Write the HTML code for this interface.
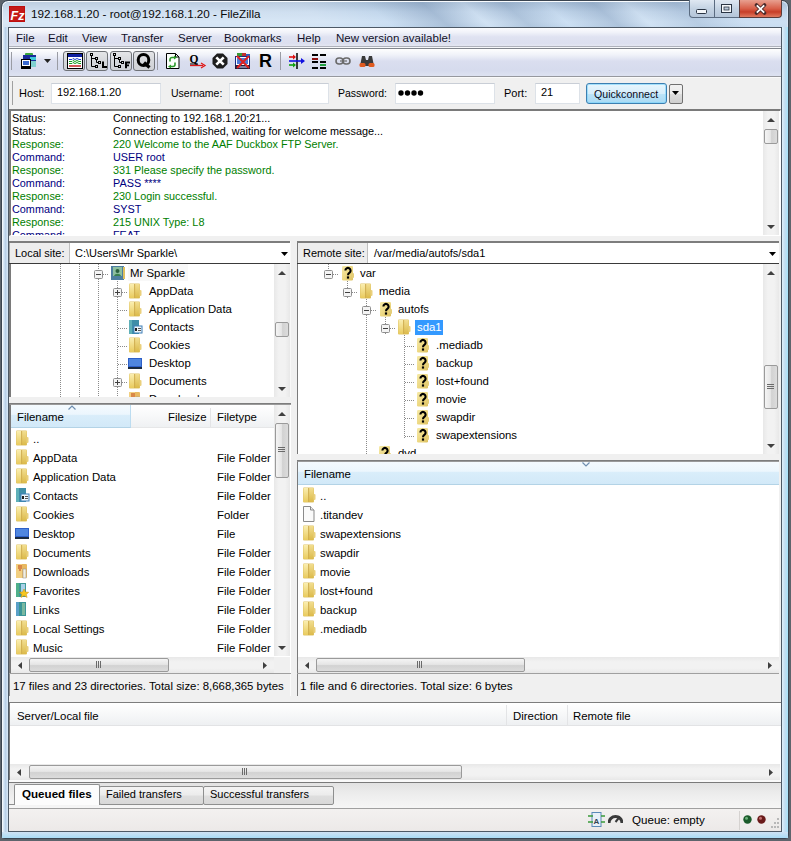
<!DOCTYPE html><html><head><meta charset="utf-8"><style>
*{margin:0;padding:0;box-sizing:border-box}
html,body{width:791px;height:841px;overflow:hidden;background:#5d646c}
body{position:relative;font-family:"Liberation Sans",sans-serif;font-size:11.4px;color:#000}
.a{position:absolute}
.t{position:absolute;white-space:pre;line-height:14px}
.tah{font-size:11px}
</style></head><body>
<svg width="0" height="0" style="position:absolute"><defs>
<linearGradient id="gf" x1="0" y1="0" x2="0" y2="1"><stop offset="0" stop-color="#faeeb0"/><stop offset="1" stop-color="#e9cb5e"/></linearGradient>
<linearGradient id="gf2" x1="0" y1="0" x2="0" y2="1"><stop offset="0" stop-color="#f2de90"/><stop offset="1" stop-color="#dcba4a"/></linearGradient>
<symbol id="folder" viewBox="0 0 16 16">
<rect x="2" y="0.5" width="11" height="15" rx="1" fill="#e0c468"/>
<rect x="2.5" y="1" width="5" height="14" fill="url(#gf)"/>
<rect x="8" y="1" width="4.5" height="14" fill="url(#gf2)"/>
<rect x="7.3" y="1" width="0.8" height="14" fill="#c9a445"/>
<rect x="12.5" y="7" width="2" height="6" rx="1" fill="#ead07c"/>
</symbol>
<symbol id="qfolder" viewBox="0 0 16 16">
<linearGradient id="gq" x1="0" y1="0" x2="1" y2="1"><stop offset="0" stop-color="#f6eaa8"/><stop offset="0.6" stop-color="#ecd67e"/><stop offset="1" stop-color="#dcc060"/></linearGradient>
<rect x="3" y="1" width="11" height="14.5" rx="1.2" fill="url(#gq)"/>
<rect x="13" y="8" width="2" height="5" rx="1" fill="#e4ce7a"/>
<path d="M6.4 5.6A2.6 2.6 0 1 1 10.6 7.6C9.6 8.3 9 8.7 9 10.2" fill="none" stroke="#000" stroke-width="2.1"/>
<rect x="7.9" y="11.4" width="2.2" height="2.2" fill="#000"/>
</symbol>
<symbol id="doc" viewBox="0 0 16 16">
<path d="M2.5 0.5h7l3.5 3.5v11.5h-10.5z" fill="#fafafa" stroke="#8a8a8a"/>
<path d="M9.5 0.5v3.5h3.5" fill="#e8e8e8" stroke="#8a8a8a"/>
</symbol>
<symbol id="ebox" viewBox="0 0 9 9">
<rect x="0.5" y="0.5" width="8" height="8" rx="1" fill="#f4f4f4" stroke="#8f8f8f"/>
<rect x="2" y="4" width="5" height="1" fill="#404040"/>
</symbol>
<symbol id="pbox" viewBox="0 0 9 9">
<rect x="0.5" y="0.5" width="8" height="8" rx="1" fill="#f4f4f4" stroke="#8f8f8f"/>
<rect x="2" y="4" width="5" height="1" fill="#404040"/><rect x="4" y="2" width="1" height="5" fill="#404040"/>
</symbol>
<symbol id="contacts" viewBox="0 0 16 16">
<rect x="2" y="1" width="10" height="14" fill="#3f8ea8"/><rect x="2" y="1" width="3" height="14" fill="#5fb0b8"/>
<rect x="7" y="7" width="8" height="7" fill="#eef6fb" stroke="#3f7fb8" stroke-width="1"/><rect x="8" y="9" width="2" height="3" fill="#222"/><rect x="11" y="9" width="3" height="1" fill="#555"/><rect x="11" y="11" width="3" height="1" fill="#555"/>
</symbol>
<symbol id="desktop" viewBox="0 0 16 16">
<rect x="1" y="3" width="14" height="11" fill="#2d5fc8"/><rect x="2" y="4" width="12" height="7" fill="#4f86e0"/><rect x="1" y="12" width="14" height="2" fill="#1a2a40"/>
</symbol>
<symbol id="downloads" viewBox="0 0 16 16">
<rect x="2" y="1" width="11" height="14" rx="1" fill="#e8b860"/><rect x="2" y="1" width="6" height="14" fill="#f2cf80"/>
<path d="M4 3h4M4 5h4M5 7h2" stroke="#c04010" stroke-width="1.2"/><rect x="9" y="6" width="3" height="9" fill="#f4f0e0" stroke="#999" stroke-width="0.6"/>
</symbol>
<symbol id="favorites" viewBox="0 0 16 16">
<rect x="2" y="1" width="10" height="14" fill="#3f9a98"/><rect x="2" y="1" width="3" height="14" fill="#4fb08a"/><rect x="7" y="2" width="4" height="8" fill="#a8d0e8"/>
<path d="M10 7l1.5 3 3.2.3-2.4 2.1.8 3.1-3.1-1.8-3 1.8.8-3.1-2.4-2.1 3.2-.3z" fill="#f6c820" stroke="#d08a10" stroke-width="0.5"/>
</symbol>
<symbol id="links" viewBox="0 0 16 16">
<rect x="2" y="1" width="10" height="14" fill="#3a9598"/><rect x="2" y="1" width="3" height="14" fill="#5aa0c8"/><rect x="8" y="2" width="3" height="12" fill="#7ab8a0"/>
</symbol>
<symbol id="user" viewBox="0 0 16 16">
<rect x="1" y="1" width="13" height="14" fill="#4e7fa0"/><rect x="3" y="2" width="9" height="9" fill="#8ec0a0"/><circle cx="7.5" cy="6" r="2" fill="#2a6040"/><path d="M4 11c1-3 6-3 7 0z" fill="#3a8050"/><rect x="13" y="2" width="2" height="12" fill="#e0c060"/>
</symbol>
</defs></svg>
<div class="a" style="left:1px;top:0px;width:788px;height:839px;border:1px solid #3a4450;border-radius:7px 7px 4px 4px;box-shadow:inset 1px 1px 0 rgba(255,255,255,.85),inset -1px -1px 0 rgba(255,255,255,.4);background:linear-gradient(90deg,#a7c1dc 0%,#bcd3ea 15%,#c8dcf1 45%,#d3e4f5 75%,#c2d8ee 100%)"></div>
<div class="a" style="left:3px;top:2px;width:784px;height:25px;border-radius:6px 6px 0 0;background:linear-gradient(41deg,rgba(255,255,255,.25) 0%,rgba(255,255,255,.2) 40%,transparent 48%,rgba(70,100,140,.25) 55%,rgba(255,255,255,.1) 60%,rgba(70,100,140,.2) 65%,transparent 70%,rgba(70,100,140,.22) 76%,rgba(255,255,255,.1) 80%,rgba(70,100,140,.15) 86%,transparent 92%),linear-gradient(#a9bfd7,#c3d7ec 40%,#cde0f3 80%,#c9ddf1)"></div>
<div class="a" style="left:3px;top:27px;width:5px;height:810px;background:linear-gradient(90deg,#e0eefa,#b9d0e8 50%,#d8e8f7)"></div>
<div class="a" style="left:782px;top:27px;width:6px;height:810px;background:linear-gradient(90deg,#dff0fa,#c2dcf0 50%,#a8e4fa)"></div>
<div class="a" style="left:2px;top:832px;width:786px;height:6px;background:linear-gradient(#cfe2f4,#a9dcf6)"></div>
<svg class="a" style="left:9px;top:6px" width="16" height="16"><rect width="16" height="16" fill="#bd0e0e"/><rect x="1" y="1" width="14" height="14" fill="#c41a18"/><text x="1.5" y="13.5" font-family="Liberation Sans" font-weight="bold" font-style="italic" font-size="12.5" fill="#fff">Fz</text></svg>
<div class="t" style="left:31px;top:7px;font-size:11.7px;color:#0a0a0a">192.168.1.20 - root@192.168.1.20 - FileZilla</div>
<div class="a" style="left:689px;top:0px;width:51px;height:18px;border:1px solid #5a6b80;border-top:none;border-radius:0 0 0 4px;background:linear-gradient(#dfe8f2,#c4d3e3 50%,#b5c6d9)"></div>
<div class="a" style="left:714px;top:0px;width:1px;height:18px;background:#5a6b80"></div>
<div class="a" style="left:739px;top:0px;width:43px;height:18px;border:1px solid #5a3a38;border-top:none;border-radius:0 0 4px 0;background:linear-gradient(#e8a090,#d8604a 50%,#c73e28 70%,#e07a60)"></div>
<svg class="a" style="left:696px;top:9px" width="12" height="6" viewBox="0 0 12 6"><rect x="0.5" y="0.5" width="10" height="4" rx="1" fill="#f4f7fa" stroke="#2a3544"/></svg>
<svg class="a" style="left:721px;top:4px" width="12" height="10" viewBox="0 0 12 10"><rect x="0.5" y="0.5" width="10" height="8" fill="#f4f7fa" stroke="#2a3544"/><rect x="3" y="3" width="5" height="3" fill="#b9c8d8" stroke="#2a3544" stroke-width="0.8"/></svg>
<svg class="a" style="left:754px;top:3px" width="13" height="12" viewBox="0 0 13 12"><path d="M2.5 2L10.5 10M10.5 2L2.5 10" stroke="#4a2a2a" stroke-width="3.6" fill="none" stroke-linecap="round"/><path d="M2.8 2.3L10.2 9.7M10.2 2.3L2.8 9.7" stroke="#fff" stroke-width="1.8" fill="none"/></svg>
<div class="a" style="left:8px;top:27px;width:774px;height:805px;border:1px solid #4d5966;background:#f0f0f0"></div>
<div class="a" style="left:9px;top:28px;width:772px;height:18px;background:linear-gradient(#fcfcfe 0%,#f0f2f9 25%,#dfe2f1 50%,#dcdfef 85%,#e4e6f1 100%)"></div>
<div class="a" style="left:9px;top:46px;width:772px;height:1px;background:#aeb1bb"></div>
<div class="a" style="left:9px;top:47px;width:772px;height:1px;background:#f6f7fa"></div>
<div class="a" style="left:9px;top:48px;width:772px;height:1px;background:#80848c"></div>
<div class="t" style="left:16px;top:31px;font-size:11.5px;color:#101028">File</div>
<div class="t" style="left:48px;top:31px;font-size:11.5px;color:#101028">Edit</div>
<div class="t" style="left:82px;top:31px;font-size:11.5px;color:#101028">View</div>
<div class="t" style="left:121px;top:31px;font-size:11.5px;color:#101028">Transfer</div>
<div class="t" style="left:178px;top:31px;font-size:11.5px;color:#101028">Server</div>
<div class="t" style="left:224px;top:31px;font-size:11.5px;color:#101028">Bookmarks</div>
<div class="t" style="left:297px;top:31px;font-size:11.5px;color:#101028">Help</div>
<div class="t" style="left:336px;top:31px;font-size:11.5px;color:#101028">New version available!</div>
<div class="a" style="left:9px;top:49px;width:772px;height:27px;background:linear-gradient(#fefefe 0%,#f0f2f9 22%,#dadeef 45%,#d6dbed 80%,#dde2f1 100%)"></div>
<div class="a" style="left:9px;top:76px;width:772px;height:1px;background:#96989e"></div>
<div class="a" style="left:11px;top:52px;width:1px;height:18px;background:#9a9ca4"></div>
<div class="a" style="left:57px;top:52px;width:1px;height:18px;background:#9a9ca4"></div>
<div class="a" style="left:157px;top:52px;width:1px;height:18px;background:#9a9ca4"></div>
<div class="a" style="left:280px;top:52px;width:1px;height:18px;background:#9a9ca4"></div>
<svg class="a" style="left:21px;top:53px" width="16" height="16" viewBox="0 0 16 16"><rect x="4" y="0" width="8" height="3" rx="1" fill="#3ca83c"/><rect x="2" y="2" width="13" height="12" fill="#1a2a9a"/><rect x="9" y="4" width="6" height="3" fill="#40c8d8"/><rect x="9" y="8" width="6" height="6" fill="#80d0d0"/><rect x="0.5" y="6.5" width="9" height="7" fill="#fff" stroke="#000"/><rect x="2" y="8" width="6" height="4" fill="#3a6ad0"/><rect x="0" y="13" width="10" height="3" fill="#000"/></svg>
<svg class="a" style="left:44px;top:59px" width="8" height="5" viewBox="0 0 8 5"><path d="M0 0h7l-3.5 4z" fill="#222"/></svg>
<div class="a" style="left:63px;top:51px;width:22px;height:20px;border:1px solid #6f7277;border-radius:3px;background:linear-gradient(#e4e5e8,#d6d8dc 50%,#cfd1d6)"></div>
<div class="a" style="left:86px;top:51px;width:22px;height:20px;border:1px solid #6f7277;border-radius:3px;background:linear-gradient(#e4e5e8,#d6d8dc 50%,#cfd1d6)"></div>
<div class="a" style="left:110px;top:51px;width:22px;height:20px;border:1px solid #6f7277;border-radius:3px;background:linear-gradient(#e4e5e8,#d6d8dc 50%,#cfd1d6)"></div>
<div class="a" style="left:133px;top:51px;width:22px;height:20px;border:1px solid #6f7277;border-radius:3px;background:linear-gradient(#e4e5e8,#d6d8dc 50%,#cfd1d6)"></div>
<svg class="a" style="left:67px;top:53px" width="17" height="16" viewBox="0 0 17 16"><rect x="0.5" y="0.5" width="15" height="15" fill="#fff" stroke="#000"/><rect x="1" y="1" width="14" height="3" fill="#1020a0"/><path d="M2 6.5h3l1-1 2 1 2-1 2 1h2" stroke="#2040d0" fill="none"/><path d="M2 8.5h3l1-1 2 1 2-1 2 1h2" stroke="#10a020" fill="none"/><path d="M2 10.5h3l1-1 2 1 2-1 2 1h2" stroke="#10a020" fill="none"/><path d="M2 13h12" stroke="#c02020" stroke-width="1.5"/></svg>
<svg class="a" style="left:89px;top:53px" width="18" height="16" viewBox="0 0 18 16"><g fill="none" stroke="#000"><rect x="1.5" y="0.5" width="2" height="2"/><rect x="6.5" y="4.5" width="2" height="2"/><rect x="9.5" y="8.5" width="2" height="2"/><rect x="6.5" y="12.5" width="2" height="2"/><path d="M2.5 3v10.5h4M2.5 5.5h4M7.5 7v2.5h2"/></g><path d="M13 8.5h2v4.5h3v2h-5z" fill="#000"/></svg>
<svg class="a" style="left:112px;top:53px" width="18" height="16" viewBox="0 0 18 16"><g fill="none" stroke="#000"><rect x="1.5" y="0.5" width="2" height="2"/><rect x="6.5" y="4.5" width="2" height="2"/><rect x="9.5" y="8.5" width="2" height="2"/><rect x="6.5" y="12.5" width="2" height="2"/><path d="M2.5 3v10.5h4M2.5 5.5h4M7.5 7v2.5h2"/></g><path d="M13 8.5h5v2h-3v1h2v1.8h-2v2h-2z" fill="#000"/></svg>
<svg class="a" style="left:136px;top:53px" width="16" height="16" viewBox="0 0 16 16"><ellipse cx="7.5" cy="7" rx="5.3" ry="5.5" fill="none" stroke="#000" stroke-width="3"/><path d="M8 9.5l5.5 5" stroke="#000" stroke-width="3.2"/></svg>
<svg class="a" style="left:166px;top:53px" width="14" height="16" viewBox="0 0 14 16"><path d="M0.5 0.5h9l3.5 3.5v11.5h-12.5z" fill="#fafffa" stroke="#000"/><path d="M9.5 0.5v3.5h3.5" fill="none" stroke="#000"/><g fill="none" stroke="#2a9a2a" stroke-width="1.6"><path d="M4 8.5v-2a2 2 0 0 1 2-2h3"/><path d="M9 9.5v2a2 2 0 0 1-2 2h-3"/></g><path d="M8 2.5l3 2-3 2z" fill="#2a9a2a"/><path d="M5 11.5l-3 2 3 2z" fill="#2a9a2a"/></svg>
<svg class="a" style="left:189px;top:53px" width="18" height="16" viewBox="0 0 18 16"><text x="0.5" y="9.5" font-family="Liberation Serif" font-weight="bold" font-size="11.5" fill="#000">Q</text><rect x="1" y="10.5" width="8" height="1" fill="#000"/><path d="M1 12.5h13" stroke="#e01818" stroke-width="1.3"/><path d="M12 10l4 2.5-4 2.5" stroke="#e01818" stroke-width="1.3" fill="none"/></svg>
<svg class="a" style="left:212px;top:53px" width="16" height="16" viewBox="0 0 16 16"><path d="M5 0.5h6l4.5 4.5v6l-4.5 4.5h-6l-4.5-4.5v-6z" fill="#1e1e1e"/><path d="M4.3 4.3l7.4 7.4M11.7 4.3l-7.4 7.4" stroke="#fff" stroke-width="2.6"/></svg>
<svg class="a" style="left:235px;top:53px" width="16" height="16" viewBox="0 0 16 16"><rect x="2" y="0" width="5" height="3" fill="#3a9a3a"/><rect x="7" y="0" width="4" height="3" fill="#c03030"/><rect x="11" y="1" width="4" height="3" fill="#3060c0"/><rect x="0.5" y="3.5" width="14" height="9" fill="#fff" stroke="#1a2a80"/><rect x="2" y="5" width="11" height="6" fill="#4a7ad8"/><rect x="0" y="12" width="15" height="4" fill="#202040"/><rect x="3" y="13" width="9" height="2" fill="#8080a0"/><path d="M2 3l12 12M14 3l-12 12" stroke="#e02020" stroke-width="2"/></svg>
<div class="t" style="left:259px;top:51px;font-size:18px;font-weight:bold;line-height:20px">R</div>
<svg class="a" style="left:289px;top:53px" width="17" height="16" viewBox="0 0 17 16"><path d="M8 0v16" stroke="#000" stroke-width="1.5"/><path d="M0 4h6" stroke="#e01010" stroke-width="1.6"/><path d="M4 1.5l3 2.5-3 2.5z" fill="#e01010"/><path d="M0 8h14" stroke="#1010e0" stroke-width="1.6"/><path d="M12 5l4 3-4 3z" fill="#1010e0"/><path d="M0 12h6" stroke="#10a010" stroke-width="1.6"/><path d="M4 9.5l3 2.5-3 2.5z" fill="#10a010"/></svg>
<svg class="a" style="left:312px;top:53px" width="16" height="16" viewBox="0 0 16 16"><rect x="0" y="1" width="6" height="2" fill="#000"/><rect x="8" y="1" width="6" height="2" fill="#000"/><rect x="0" y="5" width="6" height="2" fill="#901010"/><rect x="0" y="8" width="6" height="2" fill="#000"/><rect x="8" y="8" width="6" height="2" fill="#000"/><rect x="8" y="11" width="6" height="2" fill="#20a040"/><rect x="0" y="14" width="6" height="2" fill="#000"/><rect x="8" y="14" width="6" height="2" fill="#000"/></svg>
<svg class="a" style="left:335px;top:57px" width="17" height="8" viewBox="0 0 17 8"><g fill="none" stroke="#6a6a6a" stroke-width="1.6"><rect x="1" y="1" width="7" height="6" rx="3"/><rect x="8" y="1" width="7" height="6" rx="3"/></g><path d="M5 4h7" stroke="#6a6a6a" stroke-width="1.2"/></svg>
<svg class="a" style="left:359px;top:54px" width="16" height="14" viewBox="0 0 16 14"><path d="M1 12l2-10h3l1 4h2l1-4h3l2 10z" fill="#3a3a3a"/><rect x="0.5" y="9" width="6" height="4" rx="1.5" fill="#e05a20"/><rect x="9.5" y="9" width="6" height="4" rx="1.5" fill="#e05a20"/></svg>
<div class="a" style="left:9px;top:77px;width:772px;height:32px;background:#f0f0f0;border-top:1px solid #fafafa"></div>
<div class="a" style="left:12px;top:81px;width:1px;height:24px;background:#a0a0a0"></div>
<div class="t" style="left:19px;top:86px;font-size:11px">Host:</div>
<div class="a" style="left:51px;top:83px;width:110px;height:21px;background:#fff;border:1px solid #dde2e8;border-top-color:#c9ced6"></div>
<div class="t" style="left:57px;top:85px;font-size:11px;">192.168.1.20</div>
<div class="t" style="left:171px;top:86px;font-size:10.5px">Username:</div>
<div class="a" style="left:229px;top:83px;width:100px;height:21px;background:#fff;border:1px solid #dde2e8;border-top-color:#c9ced6"></div>
<div class="t" style="left:235px;top:85px;font-size:11px;">root</div>
<div class="t" style="left:338px;top:86px;font-size:10.5px">Password:</div>
<div class="a" style="left:395px;top:83px;width:100px;height:21px;background:#fff;border:1px solid #dde2e8;border-top-color:#c9ced6"></div>
<div class="t" style="left:401px;top:85px;font-size:11px;"></div>
<svg class="a" style="left:398px;top:90px" width="27" height="6" viewBox="0 0 27 6"><g fill="#000"><circle cx="3" cy="3" r="2.7"/><circle cx="9.5" cy="3" r="2.7"/><circle cx="16" cy="3" r="2.7"/><circle cx="22.5" cy="3" r="2.7"/></g></svg>
<div class="t" style="left:504px;top:86px;font-size:11px">Port:</div>
<div class="a" style="left:535px;top:83px;width:45px;height:21px;background:#fff;border:1px solid #dde2e8;border-top-color:#c9ced6"></div>
<div class="t" style="left:541px;top:85px;font-size:11px;">21</div>
<div class="a" style="left:586px;top:83px;width:81px;height:21px;border:1px solid #3c7fb1;border-radius:3px;box-shadow:inset 0 0 0 1px rgba(120,210,250,.6);background:linear-gradient(#e8f6fd,#d6eefb 50%,#bde4f8 51%,#a9daf4)"></div>
<div class="t" style="left:594px;top:87px;font-size:10.6px;color:#0a0a1a">Quickconnect</div>
<div class="a" style="left:669px;top:84px;width:14px;height:20px;border:1px solid #707070;border-radius:2px;background:linear-gradient(#f2f2f2,#ebebeb 50%,#dddddd 51%,#cfcfcf)"></div>
<svg class="a" style="left:672px;top:91px" width="8" height="5" viewBox="0 0 8 5"><path d="M0 0h7l-3.5 4z" fill="#000"/></svg>
<div class="a" style="left:9px;top:109px;width:772px;height:127px;border-top:2px solid #7a7a7a;border-left:2px solid #7a7a7a;border-right:1px solid #fff;border-bottom:1px solid #fff;background:#fff"></div>
<div class="a" style="left:11px;top:111px;width:752px;height:124px;overflow:hidden">
<div class="t" style="left:1px;top:1px;font-size:10.85px;line-height:13px;color:#000">Status:</div>
<div class="t" style="left:102px;top:1px;font-size:10.85px;line-height:13px;color:#000">Connecting to 192.168.1.20:21...</div>
<div class="t" style="left:1px;top:14px;font-size:10.85px;line-height:13px;color:#000">Status:</div>
<div class="t" style="left:102px;top:14px;font-size:10.85px;line-height:13px;color:#000">Connection established, waiting for welcome message...</div>
<div class="t" style="left:1px;top:27px;font-size:10.85px;line-height:13px;color:#008000">Response:</div>
<div class="t" style="left:102px;top:27px;font-size:10.85px;line-height:13px;color:#008000">220 Welcome to the AAF Duckbox FTP Server.</div>
<div class="t" style="left:1px;top:40px;font-size:10.85px;line-height:13px;color:#000080">Command:</div>
<div class="t" style="left:102px;top:40px;font-size:10.85px;line-height:13px;color:#000080">USER root</div>
<div class="t" style="left:1px;top:53px;font-size:10.85px;line-height:13px;color:#008000">Response:</div>
<div class="t" style="left:102px;top:53px;font-size:10.85px;line-height:13px;color:#008000">331 Please specify the password.</div>
<div class="t" style="left:1px;top:66px;font-size:10.85px;line-height:13px;color:#000080">Command:</div>
<div class="t" style="left:102px;top:66px;font-size:10.85px;line-height:13px;color:#000080">PASS ****</div>
<div class="t" style="left:1px;top:79px;font-size:10.85px;line-height:13px;color:#008000">Response:</div>
<div class="t" style="left:102px;top:79px;font-size:10.85px;line-height:13px;color:#008000">230 Login successful.</div>
<div class="t" style="left:1px;top:92px;font-size:10.85px;line-height:13px;color:#000080">Command:</div>
<div class="t" style="left:102px;top:92px;font-size:10.85px;line-height:13px;color:#000080">SYST</div>
<div class="t" style="left:1px;top:105px;font-size:10.85px;line-height:13px;color:#008000">Response:</div>
<div class="t" style="left:102px;top:105px;font-size:10.85px;line-height:13px;color:#008000">215 UNIX Type: L8</div>
<div class="t" style="left:1px;top:118px;font-size:10.85px;line-height:13px;color:#000080">Command:</div>
<div class="t" style="left:102px;top:118px;font-size:10.85px;line-height:13px;color:#000080">FEAT</div>
</div>
<div class="a" style="left:763px;top:111px;width:16px;height:124px;background:linear-gradient(90deg,#e8e8e8,#f2f2f2 30%,#f2f2f2 70%,#e8e8e8)"></div>
<svg class="a" style="left:767px;top:118px" width="8" height="4" viewBox="0 0 8 4"><path d="M0 4L4 0L8 4z" fill="#404040"/></svg>
<svg class="a" style="left:767px;top:225px" width="8" height="4" viewBox="0 0 8 4"><path d="M0 0L8 0L4 4z" fill="#404040"/></svg>
<div class="a" style="left:764px;top:129px;width:14px;height:15px;border:1px solid #9a9a9a;border-radius:2px;background:linear-gradient(90deg,#f4f4f4,#e6e6e6 45%,#d2d2d2 55%,#dcdcdc)"></div>
<div class="a" style="left:9px;top:241px;width:282px;height:2px;background:#7d7d7d"></div>
<div class="a" style="left:9px;top:243px;width:61px;height:20px;background:#ededed;border-right:1px solid #c0c0c0;border-left:1px solid #a0a0a0"></div>
<div class="t" style="left:15px;top:246px;font-size:11px">Local site:</div>
<div class="a" style="left:70px;top:243px;width:221px;height:20px;background:#fff"></div>
<div class="t" style="left:75px;top:246px;font-size:11px">C:\Users\Mr Sparkle\</div>
<svg class="a" style="left:281px;top:252px" width="7" height="4" viewBox="0 0 7 4"><path d="M0 0h7l-3.5 4z" fill="#000"/></svg>
<div class="a" style="left:9px;top:263px;width:282px;height:1px;background:#3a3a3a"></div>
<div class="a" style="left:297px;top:241px;width:482px;height:2px;background:#7d7d7d"></div>
<div class="a" style="left:297px;top:243px;width:71px;height:20px;background:#ededed;border-right:1px solid #c0c0c0;border-left:1px solid #7a7a7a"></div>
<div class="t" style="left:303px;top:246px;font-size:11px">Remote site:</div>
<div class="a" style="left:368px;top:243px;width:411px;height:20px;background:#fff"></div>
<div class="t" style="left:374px;top:246px;font-size:11px">/var/media/autofs/sda1</div>
<svg class="a" style="left:769px;top:252px" width="7" height="4" viewBox="0 0 7 4"><path d="M0 0h7l-3.5 4z" fill="#000"/></svg>
<div class="a" style="left:297px;top:263px;width:482px;height:1px;background:#3a3a3a"></div>
<div class="a" style="left:9px;top:264px;width:282px;height:134px;background:#fff;border-left:2px solid #7a7a7a"></div>
<div class="a" style="left:11px;top:264px;width:263px;height:133px;overflow:hidden">
<div class="a" style="left:49px;top:0px;width:1px;height:133px;background:repeating-linear-gradient(#8a8a8a 0 1px,transparent 1px 2px)"></div>
<div class="a" style="left:68px;top:0px;width:1px;height:133px;background:repeating-linear-gradient(#8a8a8a 0 1px,transparent 1px 2px)"></div>
<div class="a" style="left:87px;top:0px;width:1px;height:6px;background:repeating-linear-gradient(#8a8a8a 0 1px,transparent 1px 2px)"></div>
<div class="a" style="left:87px;top:15px;width:1px;height:118px;background:repeating-linear-gradient(#8a8a8a 0 1px,transparent 1px 2px)"></div>
<div class="a" style="left:106px;top:17px;width:1px;height:116px;background:repeating-linear-gradient(#8a8a8a 0 1px,transparent 1px 2px)"></div>
<svg class="a" style="left:83px;top:6px" width="9" height="9"><use href="#ebox"/></svg>
<div class="a" style="left:92px;top:10px;width:6px;height:1px;background:repeating-linear-gradient(90deg,#8a8a8a 0 1px,transparent 1px 2px)"></div>
<svg class="a" style="left:99px;top:1px" width="16" height="16"><use href="#user"/></svg>
<div class="a" style="left:117px;top:0px;width:60px;height:17px;background:#f8f8f8"></div>
<div class="t" style="left:119px;top:2px">Mr Sparkle</div>
<svg class="a" style="left:102px;top:24px" width="9" height="9"><use href="#pbox"/></svg>
<div class="a" style="left:111px;top:28px;width:5px;height:1px;background:repeating-linear-gradient(90deg,#8a8a8a 0 1px,transparent 1px 2px)"></div>
<svg class="a" style="left:116px;top:19px" width="16" height="16"><use href="#folder"/></svg>
<div class="t" style="left:138px;top:20px">AppData</div>
<div class="a" style="left:107px;top:46px;width:9px;height:1px;background:repeating-linear-gradient(90deg,#8a8a8a 0 1px,transparent 1px 2px)"></div>
<svg class="a" style="left:116px;top:37px" width="16" height="16"><use href="#folder"/></svg>
<div class="t" style="left:138px;top:38px">Application Data</div>
<div class="a" style="left:107px;top:64px;width:9px;height:1px;background:repeating-linear-gradient(90deg,#8a8a8a 0 1px,transparent 1px 2px)"></div>
<svg class="a" style="left:116px;top:55px" width="16" height="16"><use href="#contacts"/></svg>
<div class="t" style="left:138px;top:56px">Contacts</div>
<div class="a" style="left:107px;top:82px;width:9px;height:1px;background:repeating-linear-gradient(90deg,#8a8a8a 0 1px,transparent 1px 2px)"></div>
<svg class="a" style="left:116px;top:73px" width="16" height="16"><use href="#folder"/></svg>
<div class="t" style="left:138px;top:74px">Cookies</div>
<div class="a" style="left:107px;top:100px;width:9px;height:1px;background:repeating-linear-gradient(90deg,#8a8a8a 0 1px,transparent 1px 2px)"></div>
<svg class="a" style="left:116px;top:91px" width="16" height="16"><use href="#desktop"/></svg>
<div class="t" style="left:138px;top:92px">Desktop</div>
<svg class="a" style="left:102px;top:114px" width="9" height="9"><use href="#pbox"/></svg>
<div class="a" style="left:111px;top:118px;width:5px;height:1px;background:repeating-linear-gradient(90deg,#8a8a8a 0 1px,transparent 1px 2px)"></div>
<svg class="a" style="left:116px;top:109px" width="16" height="16"><use href="#folder"/></svg>
<div class="t" style="left:138px;top:110px">Documents</div>
<div class="a" style="left:107px;top:136px;width:9px;height:1px;background:repeating-linear-gradient(90deg,#8a8a8a 0 1px,transparent 1px 2px)"></div>
<svg class="a" style="left:116px;top:127px" width="16" height="16"><use href="#downloads"/></svg>
<div class="t" style="left:138px;top:128px">Downloads</div>
</div>
<div class="a" style="left:274px;top:264px;width:16px;height:133px;background:linear-gradient(90deg,#e8e8e8,#f2f2f2 30%,#f2f2f2 70%,#e8e8e8)"></div>
<svg class="a" style="left:278px;top:271px" width="8" height="4" viewBox="0 0 8 4"><path d="M0 4L4 0L8 4z" fill="#404040"/></svg>
<svg class="a" style="left:278px;top:387px" width="8" height="4" viewBox="0 0 8 4"><path d="M0 0L8 0L4 4z" fill="#404040"/></svg>
<div class="a" style="left:275px;top:322px;width:14px;height:15px;border:1px solid #9a9a9a;border-radius:2px;background:linear-gradient(90deg,#f4f4f4,#e6e6e6 45%,#d2d2d2 55%,#dcdcdc)"></div>
<div class="a" style="left:290px;top:241px;width:1px;height:457px;background:#f8f8f8"></div>
<div class="a" style="left:297px;top:264px;width:482px;height:191px;background:#fff;border-left:1px solid #7a7a7a"></div>
<div class="a" style="left:298px;top:264px;width:465px;height:190px;overflow:hidden">
<div class="a" style="left:30px;top:0px;width:1px;height:6px;background:repeating-linear-gradient(#8a8a8a 0 1px,transparent 1px 2px)"></div>
<div class="a" style="left:49px;top:17px;width:1px;height:18px;background:repeating-linear-gradient(#8a8a8a 0 1px,transparent 1px 2px)"></div>
<div class="a" style="left:68px;top:35px;width:1px;height:160px;background:repeating-linear-gradient(#8a8a8a 0 1px,transparent 1px 2px)"></div>
<div class="a" style="left:87px;top:53px;width:1px;height:18px;background:repeating-linear-gradient(#8a8a8a 0 1px,transparent 1px 2px)"></div>
<div class="a" style="left:106px;top:71px;width:1px;height:104px;background:repeating-linear-gradient(#8a8a8a 0 1px,transparent 1px 2px)"></div>
<svg class="a" style="left:26px;top:6px" width="9" height="9"><use href="#ebox"/></svg>
<div class="a" style="left:35px;top:10px;width:6px;height:1px;background:repeating-linear-gradient(90deg,#8a8a8a 0 1px,transparent 1px 2px)"></div>
<svg class="a" style="left:41px;top:1px" width="16" height="16"><use href="#qfolder"/></svg>
<div class="t" style="left:62px;top:2px">var</div>
<svg class="a" style="left:45px;top:24px" width="9" height="9"><use href="#ebox"/></svg>
<div class="a" style="left:54px;top:28px;width:6px;height:1px;background:repeating-linear-gradient(90deg,#8a8a8a 0 1px,transparent 1px 2px)"></div>
<svg class="a" style="left:60px;top:19px" width="16" height="16"><use href="#folder"/></svg>
<div class="t" style="left:81px;top:20px">media</div>
<svg class="a" style="left:64px;top:42px" width="9" height="9"><use href="#ebox"/></svg>
<div class="a" style="left:73px;top:46px;width:6px;height:1px;background:repeating-linear-gradient(90deg,#8a8a8a 0 1px,transparent 1px 2px)"></div>
<svg class="a" style="left:79px;top:37px" width="16" height="16"><use href="#qfolder"/></svg>
<div class="t" style="left:100px;top:38px">autofs</div>
<svg class="a" style="left:83px;top:60px" width="9" height="9"><use href="#ebox"/></svg>
<div class="a" style="left:92px;top:64px;width:6px;height:1px;background:repeating-linear-gradient(90deg,#8a8a8a 0 1px,transparent 1px 2px)"></div>
<svg class="a" style="left:98px;top:55px" width="16" height="16"><use href="#folder"/></svg>
<div class="a" style="left:117px;top:56px;width:28px;height:15px;background:#3399ff"></div>
<div class="t" style="left:119px;top:56px;color:#fff">sda1</div>
<div class="a" style="left:107px;top:82px;width:10px;height:1px;background:repeating-linear-gradient(90deg,#8a8a8a 0 1px,transparent 1px 2px)"></div>
<svg class="a" style="left:116px;top:73px" width="16" height="16"><use href="#qfolder"/></svg>
<div class="t" style="left:138px;top:74px">.mediadb</div>
<div class="a" style="left:107px;top:100px;width:10px;height:1px;background:repeating-linear-gradient(90deg,#8a8a8a 0 1px,transparent 1px 2px)"></div>
<svg class="a" style="left:116px;top:91px" width="16" height="16"><use href="#qfolder"/></svg>
<div class="t" style="left:138px;top:92px">backup</div>
<div class="a" style="left:107px;top:118px;width:10px;height:1px;background:repeating-linear-gradient(90deg,#8a8a8a 0 1px,transparent 1px 2px)"></div>
<svg class="a" style="left:116px;top:109px" width="16" height="16"><use href="#qfolder"/></svg>
<div class="t" style="left:138px;top:110px">lost+found</div>
<div class="a" style="left:107px;top:136px;width:10px;height:1px;background:repeating-linear-gradient(90deg,#8a8a8a 0 1px,transparent 1px 2px)"></div>
<svg class="a" style="left:116px;top:127px" width="16" height="16"><use href="#qfolder"/></svg>
<div class="t" style="left:138px;top:128px">movie</div>
<div class="a" style="left:107px;top:154px;width:10px;height:1px;background:repeating-linear-gradient(90deg,#8a8a8a 0 1px,transparent 1px 2px)"></div>
<svg class="a" style="left:116px;top:145px" width="16" height="16"><use href="#qfolder"/></svg>
<div class="t" style="left:138px;top:146px">swapdir</div>
<div class="a" style="left:107px;top:172px;width:10px;height:1px;background:repeating-linear-gradient(90deg,#8a8a8a 0 1px,transparent 1px 2px)"></div>
<svg class="a" style="left:116px;top:163px" width="16" height="16"><use href="#qfolder"/></svg>
<div class="t" style="left:138px;top:164px">swapextensions</div>
<div class="a" style="left:31px;top:190px;width:10px;height:1px;background:repeating-linear-gradient(90deg,#8a8a8a 0 1px,transparent 1px 2px)"></div>
<svg class="a" style="left:78px;top:181px" width="16" height="16"><use href="#qfolder"/></svg>
<div class="t" style="left:100px;top:182px">dvd</div>
</div>
<div class="a" style="left:763px;top:264px;width:16px;height:190px;background:linear-gradient(90deg,#e8e8e8,#f2f2f2 30%,#f2f2f2 70%,#e8e8e8)"></div>
<svg class="a" style="left:767px;top:271px" width="8" height="4" viewBox="0 0 8 4"><path d="M0 4L4 0L8 4z" fill="#404040"/></svg>
<svg class="a" style="left:767px;top:444px" width="8" height="4" viewBox="0 0 8 4"><path d="M0 0L8 0L4 4z" fill="#404040"/></svg>
<div class="a" style="left:764px;top:365px;width:14px;height:44px;border:1px solid #9a9a9a;border-radius:2px;background:linear-gradient(90deg,#f4f4f4,#e6e6e6 45%,#d2d2d2 55%,#dcdcdc)"></div>
<svg class="a" style="left:767px;top:384px" width="8" height="6" viewBox="0 0 8 6"><path d="M0 0.5h7M0 2.5h7M0 4.5h7" stroke="#6a6a6a"/></svg>
<div class="a" style="left:9px;top:397px;width:282px;height:7px;background:#f0f0f0"></div>
<div class="a" style="left:9px;top:403px;width:282px;height:1px;background:#7d7d7d"></div>
<div class="a" style="left:9px;top:404px;width:282px;height:270px;background:#fff;border-left:2px solid #7a7a7a;border-top:1px solid #9a9a9a"></div>
<div class="a" style="left:11px;top:405px;width:263px;height:23px;background:linear-gradient(#fff,#f7f8f9 50%,#eef0f2)"></div>
<div class="a" style="left:11px;top:405px;width:120px;height:23px;background:linear-gradient(#f4fafe,#ecf6fd 42%,#d9edfa 48%,#d2e9f8);border-right:1px solid #bcdcf0;border-bottom:1px solid #b3d3e6"></div>
<div class="a" style="left:131px;top:427px;width:143px;height:1px;background:#e6e7e8"></div>
<div class="a" style="left:210px;top:408px;width:1px;height:19px;background:#e3e4e6"></div>
<svg class="a" style="left:68px;top:405px" width="8" height="5" viewBox="0 0 8 5"><path d="M0.5 4.5L4 1L7.5 4.5" fill="none" stroke="#6f8fb0" stroke-width="1.2"/></svg>
<div class="t" style="left:17px;top:410px;">Filename</div>
<div class="t" style="left:168px;top:410px;">Filesize</div>
<div class="t" style="left:217px;top:410px;">Filetype</div>
<div class="a" style="left:11px;top:428px;width:263px;height:228px;overflow:hidden">
<svg class="a" style="left:3px;top:2px" width="16" height="16"><use href="#folder"/></svg>
<div class="t" style="left:22px;top:4px">..</div>
<svg class="a" style="left:3px;top:21px" width="16" height="16"><use href="#folder"/></svg>
<div class="t" style="left:22px;top:23px">AppData</div>
<div class="t" style="left:206px;top:23px">File Folder</div>
<svg class="a" style="left:3px;top:40px" width="16" height="16"><use href="#folder"/></svg>
<div class="t" style="left:22px;top:42px">Application Data</div>
<div class="t" style="left:206px;top:42px">File Folder</div>
<svg class="a" style="left:3px;top:59px" width="16" height="16"><use href="#contacts"/></svg>
<div class="t" style="left:22px;top:61px">Contacts</div>
<div class="t" style="left:206px;top:61px">File Folder</div>
<svg class="a" style="left:3px;top:78px" width="16" height="16"><use href="#folder"/></svg>
<div class="t" style="left:22px;top:80px">Cookies</div>
<div class="t" style="left:206px;top:80px">Folder</div>
<svg class="a" style="left:3px;top:97px" width="16" height="16"><use href="#desktop"/></svg>
<div class="t" style="left:22px;top:99px">Desktop</div>
<div class="t" style="left:206px;top:99px">File</div>
<svg class="a" style="left:3px;top:116px" width="16" height="16"><use href="#folder"/></svg>
<div class="t" style="left:22px;top:118px">Documents</div>
<div class="t" style="left:206px;top:118px">File Folder</div>
<svg class="a" style="left:3px;top:135px" width="16" height="16"><use href="#downloads"/></svg>
<div class="t" style="left:22px;top:137px">Downloads</div>
<div class="t" style="left:206px;top:137px">File Folder</div>
<svg class="a" style="left:3px;top:154px" width="16" height="16"><use href="#favorites"/></svg>
<div class="t" style="left:22px;top:156px">Favorites</div>
<div class="t" style="left:206px;top:156px">File Folder</div>
<svg class="a" style="left:3px;top:173px" width="16" height="16"><use href="#links"/></svg>
<div class="t" style="left:22px;top:175px">Links</div>
<div class="t" style="left:206px;top:175px">File Folder</div>
<svg class="a" style="left:3px;top:192px" width="16" height="16"><use href="#folder"/></svg>
<div class="t" style="left:22px;top:194px">Local Settings</div>
<div class="t" style="left:206px;top:194px">File Folder</div>
<svg class="a" style="left:3px;top:211px" width="16" height="16"><use href="#folder"/></svg>
<div class="t" style="left:22px;top:213px">Music</div>
<div class="t" style="left:206px;top:213px">File Folder</div>
</div>
<div class="a" style="left:274px;top:405px;width:16px;height:251px;background:linear-gradient(90deg,#e8e8e8,#f2f2f2 30%,#f2f2f2 70%,#e8e8e8)"></div>
<svg class="a" style="left:278px;top:412px" width="8" height="4" viewBox="0 0 8 4"><path d="M0 4L4 0L8 4z" fill="#404040"/></svg>
<svg class="a" style="left:278px;top:646px" width="8" height="4" viewBox="0 0 8 4"><path d="M0 0L8 0L4 4z" fill="#404040"/></svg>
<div class="a" style="left:275px;top:423px;width:14px;height:55px;border:1px solid #9a9a9a;border-radius:2px;background:linear-gradient(90deg,#f4f4f4,#e6e6e6 45%,#d2d2d2 55%,#dcdcdc)"></div>
<svg class="a" style="left:278px;top:447px" width="8" height="6" viewBox="0 0 8 6"><path d="M0 0.5h7M0 2.5h7M0 4.5h7" stroke="#6a6a6a"/></svg>
<div class="a" style="left:11px;top:657px;width:263px;height:16px;background:linear-gradient(#e8e8e8,#f2f2f2 30%,#f2f2f2 70%,#e8e8e8)"></div>
<svg class="a" style="left:18px;top:662px" width="4" height="7" viewBox="0 0 4 7"><path d="M4 0L0 3.5L4 7z" fill="#404040"/></svg>
<svg class="a" style="left:263px;top:662px" width="4" height="7" viewBox="0 0 4 7"><path d="M0 0L4 3.5L0 7z" fill="#404040"/></svg>
<div class="a" style="left:29px;top:658px;width:140px;height:14px;border:1px solid #9a9a9a;border-radius:2px;background:linear-gradient(#f4f4f4,#e6e6e6 45%,#d2d2d2 55%,#dcdcdc)"></div>
<svg class="a" style="left:96px;top:661px" width="6" height="8" viewBox="0 0 6 8"><path d="M0.5 0v7M2.5 0v7M4.5 0v7" stroke="#6a6a6a"/></svg>
<div class="a" style="left:274px;top:657px;width:16px;height:16px;background:#f0f0f0"></div>
<div class="a" style="left:9px;top:673px;width:282px;height:1px;background:#a0a0a0"></div>
<div class="a" style="left:9px;top:674px;width:282px;height:22px;background:#f0f0f0;border-left:1px solid #8c8c8c;border-right:1px solid #fafafa"></div>
<div class="t" style="left:13px;top:679px;">17 files and 23 directories. Total size: 8,668,365 bytes</div>
<div class="a" style="left:297px;top:454px;width:482px;height:7px;background:#f0f0f0"></div>
<div class="a" style="left:297px;top:460px;width:482px;height:1px;background:#7d7d7d"></div>
<div class="a" style="left:297px;top:461px;width:482px;height:213px;background:#fff;border-left:1px solid #7a7a7a;border-top:1px solid #9a9a9a"></div>
<div class="a" style="left:298px;top:462px;width:481px;height:23px;background:linear-gradient(#f4fafe,#ecf6fd 42%,#d9edfa 48%,#d2e9f8);border-bottom:1px solid #b3d3e6"></div>
<svg class="a" style="left:582px;top:462px" width="8" height="5" viewBox="0 0 8 5"><path d="M0.5 0.5L4 4L7.5 0.5" fill="none" stroke="#6f8fb0" stroke-width="1.2"/></svg>
<div class="t" style="left:304px;top:467px;">Filename</div>
<svg class="a" style="left:301px;top:487px" width="16" height="16"><use href="#folder"/></svg>
<div class="t" style="left:320px;top:489px;">..</div>
<svg class="a" style="left:301px;top:506px" width="16" height="16"><use href="#doc"/></svg>
<div class="t" style="left:320px;top:508px;">.titandev</div>
<svg class="a" style="left:301px;top:525px" width="16" height="16"><use href="#folder"/></svg>
<div class="t" style="left:320px;top:527px;">swapextensions</div>
<svg class="a" style="left:301px;top:544px" width="16" height="16"><use href="#folder"/></svg>
<div class="t" style="left:320px;top:546px;">swapdir</div>
<svg class="a" style="left:301px;top:563px" width="16" height="16"><use href="#folder"/></svg>
<div class="t" style="left:320px;top:565px;">movie</div>
<svg class="a" style="left:301px;top:582px" width="16" height="16"><use href="#folder"/></svg>
<div class="t" style="left:320px;top:584px;">lost+found</div>
<svg class="a" style="left:301px;top:601px" width="16" height="16"><use href="#folder"/></svg>
<div class="t" style="left:320px;top:603px;">backup</div>
<svg class="a" style="left:301px;top:620px" width="16" height="16"><use href="#folder"/></svg>
<div class="t" style="left:320px;top:622px;">.mediadb</div>
<div class="a" style="left:298px;top:657px;width:481px;height:16px;background:linear-gradient(#e8e8e8,#f2f2f2 30%,#f2f2f2 70%,#e8e8e8)"></div>
<svg class="a" style="left:305px;top:662px" width="4" height="7" viewBox="0 0 4 7"><path d="M4 0L0 3.5L4 7z" fill="#404040"/></svg>
<svg class="a" style="left:768px;top:662px" width="4" height="7" viewBox="0 0 4 7"><path d="M0 0L4 3.5L0 7z" fill="#404040"/></svg>
<div class="a" style="left:316px;top:658px;width:209px;height:14px;border:1px solid #9a9a9a;border-radius:2px;background:linear-gradient(#f4f4f4,#e6e6e6 45%,#d2d2d2 55%,#dcdcdc)"></div>
<svg class="a" style="left:417px;top:661px" width="6" height="8" viewBox="0 0 6 8"><path d="M0.5 0v7M2.5 0v7M4.5 0v7" stroke="#6a6a6a"/></svg>
<div class="a" style="left:297px;top:673px;width:482px;height:1px;background:#a0a0a0"></div>
<div class="a" style="left:297px;top:674px;width:482px;height:22px;background:#f0f0f0;border-left:1px solid #7a7a7a"></div>
<div class="t" style="left:300px;top:679px;font-size:11.65px">1 file and 6 directories. Total size: 6 bytes</div>
<div class="a" style="left:9px;top:696px;width:772px;height:6px;background:#f0f0f0"></div>
<div class="a" style="left:9px;top:702px;width:772px;height:1px;background:#7d7d7d"></div>
<div class="a" style="left:9px;top:703px;width:772px;height:80px;background:#fff;border-left:1px solid #7a7a7a"></div>
<div class="a" style="left:10px;top:703px;width:771px;height:23px;background:linear-gradient(#fff,#f7f8f9 50%,#eef0f2);border-bottom:1px solid #e2e3e5"></div>
<div class="a" style="left:506px;top:705px;width:1px;height:20px;background:#e3e4e6"></div>
<div class="a" style="left:567px;top:705px;width:1px;height:20px;background:#e3e4e6"></div>
<div class="t" style="left:17px;top:709px;">Server/Local file</div>
<div class="t" style="left:513px;top:709px;">Direction</div>
<div class="t" style="left:573px;top:709px;">Remote file</div>
<div class="a" style="left:10px;top:764px;width:770px;height:16px;background:linear-gradient(#e8e8e8,#f2f2f2 30%,#f2f2f2 70%,#e8e8e8)"></div>
<svg class="a" style="left:17px;top:769px" width="4" height="7" viewBox="0 0 4 7"><path d="M4 0L0 3.5L4 7z" fill="#404040"/></svg>
<svg class="a" style="left:769px;top:769px" width="4" height="7" viewBox="0 0 4 7"><path d="M0 0L4 3.5L0 7z" fill="#404040"/></svg>
<div class="a" style="left:29px;top:765px;width:433px;height:14px;border:1px solid #9a9a9a;border-radius:2px;background:linear-gradient(#f4f4f4,#e6e6e6 45%,#d2d2d2 55%,#dcdcdc)"></div>
<svg class="a" style="left:242px;top:768px" width="6" height="8" viewBox="0 0 6 8"><path d="M0.5 0v7M2.5 0v7M4.5 0v7" stroke="#6a6a6a"/></svg>
<div class="a" style="left:9px;top:780px;width:772px;height:2px;background:#fafafa"></div>
<div class="a" style="left:9px;top:782px;width:772px;height:1px;background:#7a7a7a"></div>
<div class="a" style="left:9px;top:783px;width:772px;height:25px;background:linear-gradient(#e2e2e2,#ececec 40%,#f6f6f6)"></div>
<div class="a" style="left:9px;top:804px;width:6px;height:1px;background:#8e8f8f"></div>
<div class="a" style="left:99px;top:786px;width:105px;height:19px;border:1px solid #8e8f8f;border-radius:2px;background:linear-gradient(#f4f4f4,#ececec 45%,#dedede 55%,#d8d8d8)"></div>
<div class="a" style="left:203px;top:786px;width:131px;height:19px;border:1px solid #8e8f8f;border-radius:2px;background:linear-gradient(#f4f4f4,#ececec 45%,#dedede 55%,#d8d8d8)"></div>
<div class="a" style="left:14px;top:784px;width:86px;height:21px;border:1px solid #8e8f8f;border-bottom:none;border-radius:2px 2px 0 0;background:#fcfcfc"></div>
<div class="t" style="left:22px;top:787px;font-weight:bold;font-size:11.6px">Queued files</div>
<div class="t" style="left:106px;top:787px;font-size:11px">Failed transfers</div>
<div class="t" style="left:210px;top:787px;font-size:11px">Successful transfers</div>
<div class="a" style="left:9px;top:808px;width:772px;height:1px;background:#a0a0a0"></div>
<div class="a" style="left:9px;top:809px;width:772px;height:22px;background:linear-gradient(#f3f1f0,#ece9e8)"></div>
<div class="a" style="left:739px;top:811px;width:1px;height:19px;background:#d5d2d0"></div>
<svg class="a" style="left:588px;top:812px" width="17" height="15" viewBox="0 0 17 15"><rect x="4" y="0.5" width="9" height="14" fill="#e8f0f8" stroke="#5a8ab8"/><text x="8.5" y="12" text-anchor="middle" font-family="Liberation Sans" font-size="8" font-weight="bold" fill="#345">A</text><path d="M0 4h5M13 4h4M0 10h5M13 10h4" stroke="#3a9a3a" stroke-width="1.3"/></svg>
<svg class="a" style="left:608px;top:815px" width="15" height="8" viewBox="0 0 15 8"><path d="M1 8a6.5 6.5 0 0 1 13 0" stroke="#3a3a3a" stroke-width="3" fill="none"/><path d="M7.5 7L12 1.5" stroke="#3a3a3a" stroke-width="2"/></svg>
<div class="t" style="left:632px;top:813px;font-size:11.6px">Queue: empty</div>
<svg class="a" style="left:743px;top:815px" width="9" height="9" viewBox="0 0 9 9"><circle cx="4.5" cy="4.5" r="4.2" fill="#1a5a2a"/><circle cx="3.5" cy="3.3" r="1.5" fill="#6ab07a"/></svg>
<svg class="a" style="left:757px;top:815px" width="9" height="9" viewBox="0 0 9 9"><circle cx="4.5" cy="4.5" r="4.2" fill="#6a1a1a"/><circle cx="3.5" cy="3.3" r="1.5" fill="#c07070"/></svg>
<svg class="a" style="left:771px;top:818px" width="9" height="11" viewBox="0 0 9 11"><g fill="#b8b8b8"><rect x="6" y="0" width="2" height="2"/><rect x="6" y="4" width="2" height="2"/><rect x="3" y="4" width="2" height="2"/><rect x="6" y="8" width="2" height="2"/><rect x="3" y="8" width="2" height="2"/><rect x="0" y="8" width="2" height="2"/></g></svg>
</body></html>
